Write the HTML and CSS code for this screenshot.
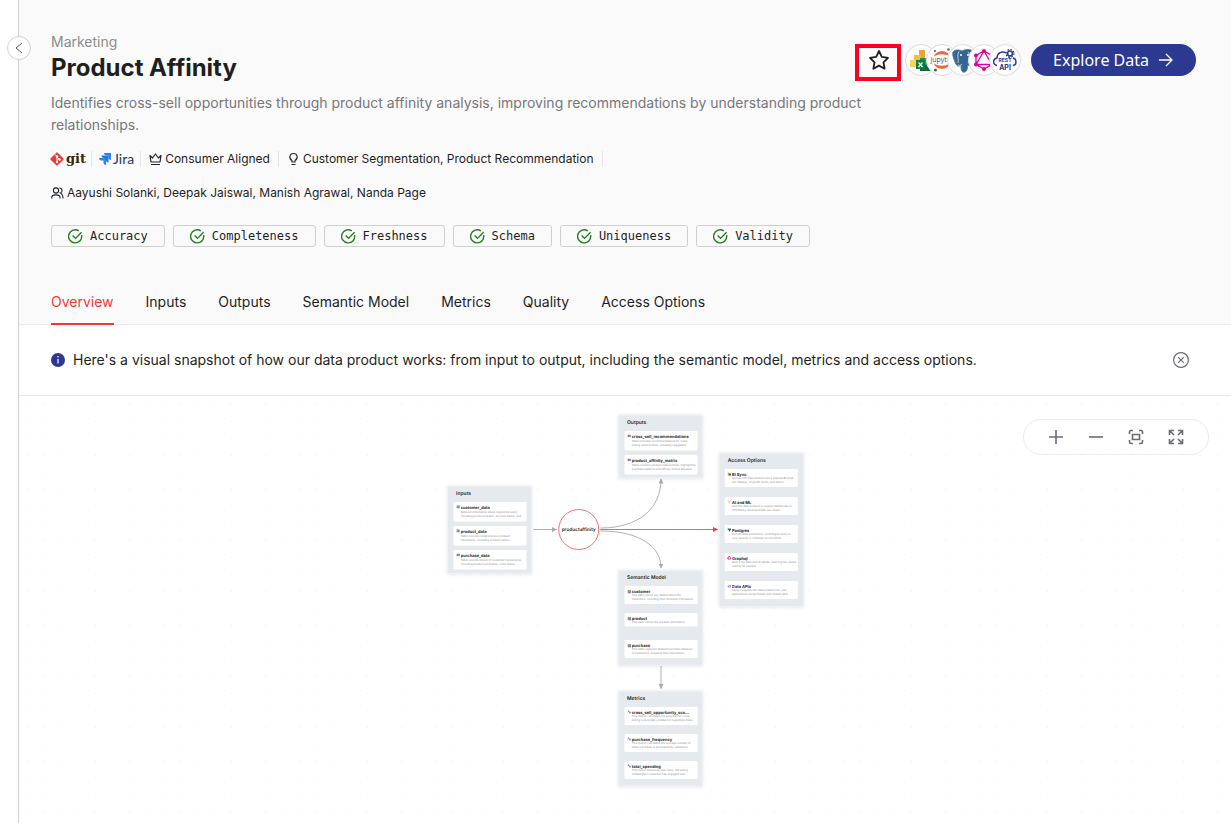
FILE: index.html
```html
<!DOCTYPE html>
<html lang="en">
<head>
<meta charset="utf-8">
<title>Product Affinity</title>
<link rel="stylesheet" href="styles.css">
</head>
<body>
<div class="app">
  <aside class="rail">
    <button class="collapse" aria-label="Collapse sidebar">
      <svg width="14" height="14" viewBox="0 0 14 14"><path d="M10 2 4 7l6 5" fill="none" stroke="#555" stroke-width="1"/></svg>
    </button>
  </aside>
  <main class="main">
    <header class="header">
      <div class="heading">
        <div>
          <div class="domain">Marketing</div>
          <h1 class="title">Product Affinity</h1>
        </div>
        <div class="actions">
          <button class="favorite" aria-label="Favorite">
            <svg width="22" height="22" viewBox="0 0 22 22"><path d="M11 2l2.8 5.9 6.2.9-4.5 4.5 1.1 6.4L11 16.600l-5.600 3.100 1.100-6.400L2 8.800l6.200-.9z" fill="none" stroke="#1f1f1f" stroke-width="1.800" stroke-linejoin="round"/></svg>
          </button>
          <div class="tools">
            <span class="tool"><svg viewBox="0 0 30 30"><path d="M13 5h6v17h-6z" fill="#e8a33b"/><path d="M8 10h7v12H8z" fill="#f5bd45"/><path d="M4 15h6v7H4z" fill="#fbd25d"/><path d="M14 13h11v13H14z" fill="#1e8f50"/><path d="M19 13h6v6h-6z" fill="#2aa867"/><path d="M14 20h11v6H14z" fill="#176a3f"/><path d="M10 15h9v9h-9z" fill="#107c41"/><path d="m12.500 17.500 4 4.500m0-4.500-4 4.500" stroke="#fff" stroke-width="1.200"/></svg></span>
            <span class="tool"><svg viewBox="0 0 30 30"><path d="M7 11.500C9 4.500 21 4.500 23 11.500 18 8.500 12 8.500 7 11.500zM7 18.500c2 7 14 7 16 0-5 3-11 3-16 0z" fill="#e8693a"/><circle cx="8" cy="6" r="1" fill="#555"/><circle cx="21.500" cy="4.500" r="1.300" fill="#666"/><circle cx="8.500" cy="25" r="1.500" fill="#555"/><text class="jupyter" x="15" y="17" text-anchor="middle">jupyter</text></svg></span>
            <span class="tool"><svg viewBox="0 0 30 30"><path d="M5 7c2-3 7-2 9-1 4-2 10-2 12 1 1 4-1 8-3 11l2 1c-2 2-4 2-5 1-1 2 0 6-3 7-4 1-4-3-4-7-2 2-4 1-5-1C6 15 4 10 5 7z" fill="#336791" stroke="#5d7d98"/><path d="M11 6.500C8.500 11 11 14 10 18m6-12" fill="none" stroke="#c4d2de" stroke-width="1"/><path d="M20 7c3 4 2 7 0 11M14 19c-1 1-2 2-4 1" fill="none" stroke="#c4d2de" stroke-width="1"/><circle cx="13" cy="10" r="1" fill="#fff"/><circle cx="20" cy="10" r="1" fill="#fff"/></svg></span>
            <span class="tool"><svg viewBox="0 0 30 30"><path d="M15 6 23 10.500v9L15 24l-8-4.500v-9zM15 6 7 19.500h16z" fill="none" stroke="#e10098" stroke-width="1.300"/><g fill="#e10098"><circle cx="15" cy="6" r="2"/><circle cx="23" cy="10.500" r="2"/><circle cx="23" cy="19.500" r="2"/><circle cx="15" cy="24" r="2"/><circle cx="7" cy="19.500" r="2"/><circle cx="7" cy="10.500" r="2"/></g></svg></span>
            <span class="tool"><svg viewBox="0 0 30 30"><path d="M7 20.500c-5-1-4-7 0-7.500 0-5 5-7.500 9-5M23 13c4 1 4 7 0 7.500" fill="none" stroke="#2b3990" stroke-width="1.400"/><circle cx="20" cy="8.500" r="2.500" fill="none" stroke="#2b3990" stroke-width="1.700"/><circle cx="20" cy="8.500" r="4" fill="none" stroke="#2b3990" stroke-width="1.200" stroke-dasharray="1.600 1.540"/><text class="rest" x="15" y="17" text-anchor="middle">REST</text><text class="api" x="15" y="25" text-anchor="middle">API</text></svg></span>
          </div>
          <button class="explore">Explore Data
            <svg width="16" height="16" viewBox="0 0 16 16"><path d="M1 8h13M8 2l6 6-6 6" fill="none" stroke="#fff" stroke-width="1.300"/></svg>
          </button>
        </div>
      </div>
      <p class="description">Identifies cross-sell opportunities through product affinity analysis, improving recommendations by understanding product relationships.</p>
      <div class="meta">
        <a class="meta-item git" href="#git"><svg width="16" height="16" viewBox="0 0 16 16"><rect x="3" y="3" width="10" height="10" rx="1" transform="rotate(45 8 8)" fill="#ef3b36"/><path d="m6 3.500 2 2v6M8 6l2.500 2.500" stroke="#fff" stroke-width="1" fill="none"/><g fill="#fff"><circle cx="8" cy="5.500" r="1.200"/><circle cx="8" cy="11" r="1.200"/><circle cx="10.500" cy="8.500" r="1.200"/></g></svg><span>git</span></a>
        <a class="meta-item jira" href="#jira"><svg width="14" height="14" viewBox="0 0 14 14"><path d="M6 1h7v7c-1.500 0-2.500-1-2.500-2.500V3.500h-2C7 3.500 6 2.500 6 1z" fill="#2684ff"/><path d="M3.500 3.500h7v7C9 10.500 8 9.500 8 8V6H6C4.500 6 3.500 5 3.500 3.500z" fill="#1f75f0"/><path d="M1 6h7v7c-1.500 0-2.500-1-2.500-2.500v-2h-2C2 8.500 1 7.500 1 6z" fill="#2684ff"/></svg><span>Jira</span></a>
        <span class="meta-item"><svg width="13" height="14" viewBox="0 0 13 14"><path d="M1 3.500 3.500 6l3-4 3 4L12 3.500 11 10H2zM2 12.500h9" fill="none" stroke="#1f2430" stroke-width="1.200" stroke-linejoin="round"/></svg>Consumer Aligned</span>
        <span class="meta-item"><svg width="13" height="14" viewBox="0 0 13 14"><path d="M5 10V8.500C1.500 6.500 2.500 1.500 6.500 1.500s5 5 1.500 7V10zM4.500 12.500h4" fill="none" stroke="#1f2430" stroke-width="1.100"/></svg>Customer Segmentation, Product Recommendation</span>
      </div>
      <div class="authors"><svg width="13" height="14" viewBox="0 0 13 14"><g fill="none" stroke="#1f2430" stroke-width="1.100"><circle cx="5" cy="4.500" r="2.600"/><path d="M.8 12.500v-1C.8 8 9 8 9 11.500v1M8.500 2c3.200 0 3.200 4.500 1 5 1.500.8 2.500 2.500 2.500 5.500"/></g></svg>Aayushi Solanki, Deepak Jaiswal, Manish Agrawal, Nanda Page</div>
      <div class="checks">
        <span class="check"><svg class="ok"><use href="#ok"/></svg>Accuracy</span>
        <span class="check"><svg class="ok"><use href="#ok"/></svg>Completeness</span>
        <span class="check"><svg class="ok"><use href="#ok"/></svg>Freshness</span>
        <span class="check"><svg class="ok"><use href="#ok"/></svg>Schema</span>
        <span class="check"><svg class="ok"><use href="#ok"/></svg>Uniqueness</span>
        <span class="check"><svg class="ok"><use href="#ok"/></svg>Validity</span>
      </div>
      <nav class="tabs">
        <a class="tab active" href="#overview">Overview</a>
        <a class="tab" href="#inputs">Inputs</a>
        <a class="tab" href="#outputs">Outputs</a>
        <a class="tab" href="#semantic">Semantic Model</a>
        <a class="tab" href="#metrics">Metrics</a>
        <a class="tab" href="#quality">Quality</a>
        <a class="tab" href="#access">Access Options</a>
      </nav>
    </header>
    <section class="notice">
      <svg width="14" height="14" viewBox="0 0 14 14"><circle cx="7" cy="7" r="7" fill="#2b3990"/><path d="M7 3v1.500M7 6v4.500" stroke="#fff" stroke-width="1.200"/></svg>
      <span class="notice-text">Here's a visual snapshot of how our data product works: from input to output, including the semantic model, metrics and access options.</span>
      <button class="close" aria-label="Dismiss"><svg width="16" height="16" viewBox="0 0 16 16"><circle cx="8" cy="8" r="7.400" fill="none" stroke="#6b6b73" stroke-width="1.200"/><path d="m5.200 5.200 5.600 5.600m0-5.600-5.600 5.600" stroke="#6b6b73" stroke-width="1.200"/></svg></button>
    </section>
    <section class="canvas">
      <svg class="graph" viewBox="0 0 4848 1708">
        <defs>
          <marker id="grey" viewBox="0 0 10 10" refX="9" refY="5" markerWidth="20" markerHeight="20" markerUnits="userSpaceOnUse" orient="auto"><path class="head" d="M0 0 10 5 0 10z"/></marker>
          <marker id="red" viewBox="0 0 10 10" refX="9" refY="5" markerWidth="20" markerHeight="20" markerUnits="userSpaceOnUse" orient="auto"><path class="head-hot" d="M0 0 10 5 0 10z"/></marker>
          <symbol id="ok" viewBox="0 0 16 16"><path d="M14.500 6.500A7 7 0 1 1 11.500 2M5 7l3 3 6.500-6.500" fill="none" stroke="#237b1f" stroke-width="1.500"/></symbol>
          <symbol id="table" viewBox="0 0 12 12"><path d="M1 1h10v10H1zM1 4h10M1 7.500h10M6 4v7" fill="none" stroke="#333" stroke-width="1.500"/></symbol>
          <symbol id="rows" viewBox="0 0 12 12"><path d="M1 3h10v6H1zM1 6h10" fill="none" stroke="#333" stroke-width="2"/></symbol>
          <symbol id="pulse" viewBox="0 0 12 12"><path d="M0 6h2l2-5 4 10 2-5h2" fill="none" stroke="#222" stroke-width="1.500"/></symbol>
        </defs>
        <path class="edge" d="M2058 534H2150" marker-end="url(#grey)"/>
        <path class="edge" d="M2325 528C2480 528 2568 450 2568 332" marker-end="url(#grey)"/>
        <path class="edge" d="M2325 540C2480 540 2568 600 2568 688" marker-end="url(#grey)"/>
        <path class="edge" d="M2568 1080V1170" marker-end="url(#grey)"/>
        <path class="edge hot" d="M2325 534H2794" marker-end="url(#red)"/>
        <circle class="product" cx="2239" cy="534" r="80"/>
        <text class="product-name" x="2239" y="540" text-anchor="middle">productaffinity</text>

        <g transform="translate(1714 360)">
          <rect class="group" width="336" height="350"/>
          <text class="group-title" x="34" y="34">Inputs</text>
          <g transform="translate(24 64)"><rect class="card" width="292" height="78"/><use href="#table" x="12" y="13" width="13" height="13"/><text class="name" x="29" y="26">customer_data</text><text class="desc" x="29" y="42">Detailed information about registered users,</text><text class="desc" x="29" y="61">including personal details, account status, and...</text></g>
          <g transform="translate(24 160)"><rect class="card" width="292" height="78"/><use href="#table" x="12" y="13" width="13" height="13"/><text class="name" x="29" y="26">product_data</text><text class="desc" x="29" y="42">Table records comprehensive product</text><text class="desc" x="29" y="61">information, including product names,...</text></g>
          <g transform="translate(24 256)"><rect class="card" width="292" height="78"/><use href="#rows" x="12" y="13" width="13" height="13"/><text class="name" x="29" y="26">purchase_data</text><text class="desc" x="29" y="42">Table records details of customer transactions,</text><text class="desc" x="29" y="61">including product purchases, order dates,...</text></g>
        </g>

        <g transform="translate(2398 76)">
          <rect class="group" width="336" height="252"/>
          <text class="group-title" x="34" y="34">Outputs</text>
          <g transform="translate(24 64)"><rect class="card" width="292" height="78"/><use href="#rows" x="12" y="13" width="13" height="13"/><text class="name" x="29" y="26">cross_sell_recommendations</text><text class="desc" x="29" y="42">Table provides recommendations for cross-</text><text class="desc" x="29" y="61">selling opportunities, including suggested...</text></g>
          <g transform="translate(24 160)"><rect class="card" width="292" height="78"/><use href="#rows" x="12" y="13" width="13" height="13"/><text class="name" x="29" y="26">product_affinity_matrix</text><text class="desc" x="29" y="42">Table contains product relationships, highlighting</text><text class="desc" x="29" y="61">purchase patterns and affinity scores between...</text></g>
        </g>

        <g transform="translate(2801 228)">
          <rect class="group" width="336" height="614"/>
          <text class="group-title" x="34" y="34">Access Options</text>
          <g transform="translate(22 64)"><rect class="card" width="292" height="72"/><path d="M12 14h6v12h-6z" fill="#f2b63c"/><path d="M16 18h9v8h-9z" fill="#107c41"/><text class="name" x="29" y="26">BI Sync</text><text class="desc" x="29" y="40">Access this data product using popular BI tools</text><text class="desc" x="29" y="56">like Tableau, PowerBI, Excel, and others.</text></g>
          <g transform="translate(22 176)"><rect class="card" width="292" height="72"/><path d="M13 14c3 5 7 5 10 0M18 18v8" fill="none" stroke="#e8693a" stroke-width="2"/><text class="name" x="29" y="26">AI and ML</text><text class="desc" x="29" y="40">Use this data product in Jupyter Notebooks to</text><text class="desc" x="29" y="56">effortlessly develop AI/ML use cases.</text></g>
          <g transform="translate(22 288)"><rect class="card" width="292" height="72"/><path d="M12 14h13v7h-4v5h-4v-5h-5z" fill="#336791"/><text class="name" x="29" y="26">Postgres</text><text class="desc" x="29" y="40">Access data seamlessly via Postgres and run</text><text class="desc" x="29" y="56">your queries in a familiar environment.</text></g>
          <g transform="translate(22 400)"><rect class="card" width="292" height="72"/><path d="m18 13 6 4v6l-6 4-6-4v-6zM18 13l-6 10h12z" fill="none" stroke="#e10098" stroke-width="2"/><text class="name" x="29" y="26">Graphql</text><text class="desc" x="29" y="40">Query the data with GraphQL, tailoring the results</text><text class="desc" x="29" y="56">exactly as needed.</text></g>
          <g transform="translate(22 512)"><rect class="card" width="292" height="72"/><path d="M13 24h10v-6h-4l-6 3z" fill="none" stroke="#2b3990" stroke-width="2"/><text class="name" x="29" y="26">Data APIs</text><text class="desc" x="29" y="40">Easily integrate this data product into your</text><text class="desc" x="29" y="56">applications using flexible and reliable APIs.</text></g>
        </g>

        <g transform="translate(2398 697)">
          <rect class="group" width="336" height="380"/>
          <text class="group-title" x="34" y="34">Semantic Model</text>
          <g transform="translate(24 63)"><rect class="card" width="292" height="72"/><use href="#table" x="12" y="16" width="14" height="14"/><text class="name" x="29" y="26">customer</text><text class="desc" x="29" y="40">This table stores key details about the</text><text class="desc" x="29" y="56">customers, including their personal information...</text></g>
          <g transform="translate(24 171)"><rect class="card" width="292" height="54"/><use href="#table" x="12" y="16" width="14" height="14"/><text class="name" x="29" y="26">product</text><text class="desc" x="29" y="40">This table stores the product information.</text></g>
          <g transform="translate(24 279)"><rect class="card" width="292" height="72"/><use href="#table" x="12" y="16" width="14" height="14"/><text class="name" x="29" y="26">purchase</text><text class="desc" x="29" y="40">This table captures detailed purchase behavior</text><text class="desc" x="29" y="56">of customers, including their transaction...</text></g>
        </g>

        <g transform="translate(2398 1180)">
          <rect class="group" width="336" height="380"/>
          <text class="group-title" x="34" y="34">Metrics</text>
          <g transform="translate(24 64)"><rect class="card" width="292" height="72"/><use href="#pulse" x="12" y="13" width="14" height="14"/><text class="name" x="29" y="26">cross_sell_opportunity_sco...</text><text class="desc" x="29" y="40">This metric calculates the potential for cross-</text><text class="desc" x="29" y="56">selling a secondary product to customers base...</text></g>
          <g transform="translate(24 172)"><rect class="card" width="292" height="72"/><use href="#pulse" x="12" y="13" width="14" height="14"/><text class="name" x="29" y="26">purchase_frequency</text><text class="desc" x="29" y="40">This metric calculates the average number of</text><text class="desc" x="29" y="56">times a product is purchased by customers...</text></g>
          <g transform="translate(24 280)"><rect class="card" width="292" height="72"/><use href="#pulse" x="12" y="13" width="14" height="14"/><text class="name" x="29" y="26">total_spending</text><text class="desc" x="29" y="40">This metric measures how many marketing</text><text class="desc" x="29" y="56">campaigns a customer has engaged with.</text></g>
        </g>
      </svg>
      <div class="toolbar">
        <button class="zoom" aria-label="Zoom in"><svg width="16" height="16" viewBox="0 0 16 16"><path d="M8 1v14M1 8h14"/></svg></button>
        <button class="zoom" aria-label="Zoom out"><svg width="16" height="16" viewBox="0 0 16 16"><path d="M1 8h14"/></svg></button>
        <button class="zoom" aria-label="Fit view"><svg width="16" height="16" viewBox="0 0 16 16"><path d="M1.500 5V3q0-1.500 1.500-1.500h2M11 1.500h2q1.500 0 1.500 1.500v2M14.500 11v2q0 1.500-1.500 1.500h-2M5 14.500H3q-1.500 0-1.500-1.500v-2M4.500 5.500h7v5h-7z"/></svg></button>
        <button class="zoom" aria-label="Full screen"><svg width="16" height="16" viewBox="0 0 16 16"><path d="M1.500 6V1.500H6M2 2l4 4M10 1.500h4.500V6M14 2l-4 4M14.500 10v4.500H10M14 14l-4-4M6 14.500H1.500V10M2 14l4-4"/></svg></button>
      </div>
    </section>
  </main>
</div>
</body>
</html>
```
FILE: styles.css
```css
* { box-sizing: border-box; }
body { margin: 0; background: #fff; color: #1f1f1f; font-family: Inter, "Liberation Sans", sans-serif; font-size: 14px; }
button { margin: 0; padding: 0; border: 0; background: none; font: inherit; color: inherit; cursor: pointer; }
a { color: inherit; text-decoration: none; }
svg { display: block; flex: none; }

.app { display: flex; min-height: 100vh; }
.rail { position: relative; flex: none; width: 19px; border-right: 1px solid #d0d0d0; background: #fff; }
.collapse { position: absolute; top: 36px; left: 7px; width: 24px; height: 24px; display: flex; align-items: center; justify-content: center; border: 1px solid #d0d0d0; border-radius: 50%; background: #fff; }
.main { flex: 1; min-width: 0; display: flex; flex-direction: column; }

.header { padding: 32px 35px 0 32px; background: #fafafa; border-bottom: 1px solid #ebebeb; }
.heading { display: flex; justify-content: space-between; }
.domain { line-height: 20px; color: #8c8c8c; }
.title { margin: 0; font-size: 24px; line-height: 32px; font-weight: 700; }
.actions { display: flex; align-items: flex-start; padding-top: 12px; }
.favorite { width: 46px; height: 37px; padding: 0 8px 5px 9px; border: 4px solid #fb0021; }
.tools { display: flex; margin: 0 10px 0 4px; }
.tool { width: 32px; height: 32px; border: 1px solid #dcdcdc; border-radius: 50%; background: #fff; overflow: hidden; }
.tool + .tool { margin-left: -11px; }
.tool svg { width: 30px; height: 30px; }
.jupyter { font-family: "Open Sans", sans-serif; font-size: 7px; fill: #4e4e4e; }
.rest { font-size: 5px; font-weight: 700; fill: #2b3990; }
.api { font-size: 7px; font-weight: 700; fill: #2b3990; }
.explore { display: flex; align-items: center; gap: 9px; height: 32px; padding: 0 22px; border-radius: 16px; background: #2b3990; color: #fff; font-family: "Noto Sans", sans-serif; font-size: 16px; }

.description { margin: 8px 0 0; max-width: 820px; line-height: 22px; color: #77777b; }
.meta { display: flex; align-items: center; margin-top: 15px; font-size: 12px; line-height: 16px; }
.meta-item { display: flex; align-items: center; gap: 3px; height: 16px; padding: 0 8px; border-right: 1px solid #e6e6e6; }
.git { gap: 1px; padding: 0 5px 0 0; margin-left: -2px; font-family: "DejaVu Serif", serif; font-weight: 700; font-size: 13px; color: #362701; }
.jira { gap: 1px; padding: 0 6px; font-family: Lato, sans-serif; font-size: 14px; color: #253858; }
.authors { display: flex; align-items: center; gap: 3px; margin-top: 18px; font-size: 12px; line-height: 16px; }
.checks { display: flex; flex-wrap: wrap; gap: 8px; margin-top: 24px; }
.check { display: flex; align-items: center; gap: 7px; height: 22px; padding: 0 16px; border: 1px solid #d0d0d0; border-radius: 3px; font-family: "DejaVu Sans Mono", monospace; font-size: 12px; }
.ok { width: 15px; height: 15px; }
.tabs { display: flex; gap: 32px; margin-top: 33px; }
.tab { height: 45px; margin-bottom: -1px; line-height: 44px; border-bottom: 2px solid transparent; }
.active { color: #ee3a32; border-color: #ee3a32; }

.notice { display: flex; align-items: center; gap: 8px; height: 71px; padding: 0 42px 0 32px; border-bottom: 1px solid #e8e8e8; }
.notice-text { flex: 1; line-height: 22px; }

.canvas { position: relative; flex: 1; background: radial-gradient(circle, #f9f9f9 1px, transparent 1px) 0 0 / 17px 17px; }
.graph { width: 100%; height: auto; text-rendering: geometricPrecision; }
.group { fill: #e6eaef; stroke: #f1f3f5; stroke-width: 4; filter: drop-shadow(0 2px 6px #0000001c); }
.group-title { font-size: 20px; font-weight: 600; fill: #1f1f1f; }
.card { fill: #fff; rx: 4px; }
.name { font-size: 16px; font-weight: 700; fill: #1f1f1f; }
.desc { font-size: 11px; fill: #8a8a8e; }
.product { fill: #fff; stroke: #f4706b; stroke-width: 4; }
.product-name { font-size: 19px; font-weight: 600; fill: #1f1f1f; }
.edge { fill: none; stroke: #b1b1b7; stroke-width: 4; }
.hot { stroke: #f4605b; }
.head { fill: #a9a9ad; }
.head-hot { fill: #f0403a; }
.toolbar { position: absolute; top: 23px; right: 22px; display: flex; padding: 0 12px; height: 36px; border: 1px solid #ececec; border-radius: 18px; background: #fff; }
.zoom { width: 40px; display: flex; align-items: center; justify-content: center; }
.zoom path { fill: none; stroke: #6b6b73; stroke-width: 1.600; }
```
